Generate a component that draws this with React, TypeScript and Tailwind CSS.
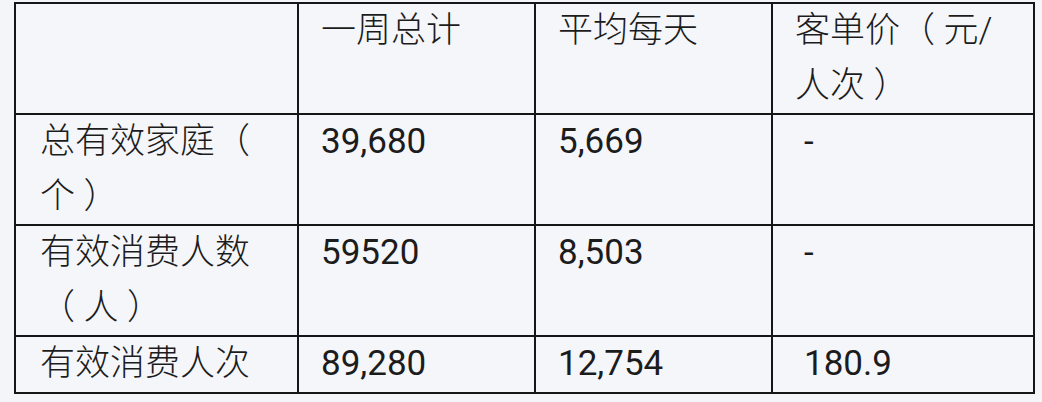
const rows: { label: React.ReactNode; total: string; daily: string; price: string }[] = [
  { label: <>总有效家庭（<br />个 ）</>, total: '39,680', daily: '5,669', price: '-' },
  { label: <>有效消费人数<br />（ 人 ）</>, total: '59520', daily: '8,503', price: '-' },
  { label: '有效消费人次', total: '89,280', daily: '12,754', price: '180.9' },
];

const cell = 'border-2 border-[#161616] align-top p-0 pl-[22px]';

export default function App() {
  return (
    <div
      className="w-[1042px] h-[402px] bg-[#f4f5f8] pl-[14px] pt-[2px] text-[35px] leading-[54.5px] text-[#1c1c1c] overflow-hidden"
      style={{ fontFamily: 'Roboto, "Noto Sans CJK SC", sans-serif' }}
    >
      <table className="table-fixed border-collapse w-[1019px] bg-[#f5f6fa]">
        <colgroup>
          <col className="w-[283px]" />
          <col className="w-[237px]" />
          <col className="w-[237px]" />
          <col className="w-[262px]" />
        </colgroup>
        <thead>
          <tr>
            <th className={`${cell} font-light text-left`}>
              <br />
              <br />
            </th>
            <th className={`${cell} font-light text-left`}>一周总计</th>
            <th className={`${cell} font-light text-left`}>平均每天</th>
            <th className={`${cell} font-light text-left`}>
              客单价（ 元/
              <br />
              人次 ）
            </th>
          </tr>
        </thead>
        <tbody>
          {rows.map((r, i) => (
            <tr key={i}>
              <td className={`${cell} pl-[24px] font-light`}>{r.label}</td>
              <td className={cell}>{r.total}</td>
              <td className={cell}>{r.daily}</td>
              <td className={`${cell} pl-[31px]`}>{r.price}</td>
            </tr>
          ))}
        </tbody>
      </table>
    </div>
  );
}
